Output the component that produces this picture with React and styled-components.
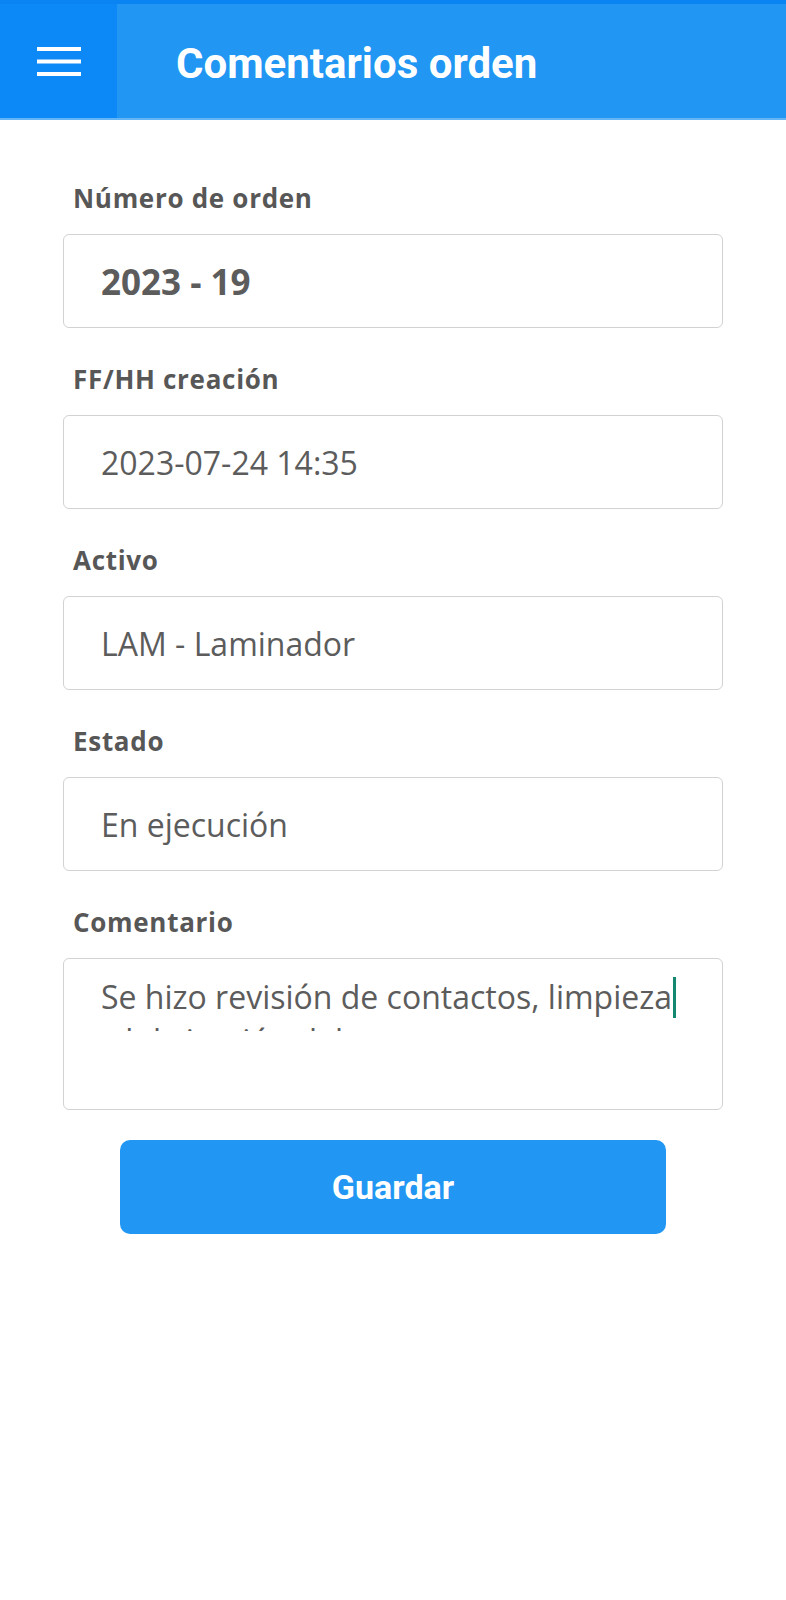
import styled, { createGlobalStyle } from "styled-components";

const GlobalStyle = createGlobalStyle`
  html, body {
    margin: 0;
    padding: 0;
    background: #ffffff;
  }
  body {
    font-family: "Open Sans", "Noto Sans", sans-serif;
  }
  * {
    box-sizing: border-box;
  }
`;

const Screen = styled.div`
  width: 786px;
  min-height: 1600px;
  background: #fff;
`;

const Header = styled.header`
  display: flex;
  height: 118px;
  background: #2196f3;
  border-top: 4px solid #0a84f2;
  box-shadow: 0 2px 0 #64b5f6;
`;

const MenuButton = styled.div`
  width: 117px;
  display: flex;
  align-items: center;
  justify-content: center;
  background: #0c89f6;
`;

const Title = styled.h1`
  margin: 0;
  padding: 6px 0 0 59px;
  align-self: center;
  font-family: Roboto, "Liberation Sans", sans-serif;
  font-weight: 700;
  font-size: 42px;
  line-height: 1;
  color: #fff;
`;

const Form = styled.main`
  display: flex;
  flex-direction: column;
  gap: 33px;
  padding: 62px 63px 0;
`;

const Group = styled.div`
  display: flex;
  flex-direction: column;
`;

const Label = styled.label`
  display: block;
  margin-bottom: 18px;
  padding-left: 10px;
  font-size: 26px;
  font-weight: 700;
  letter-spacing: 0.7px;
  line-height: 36px;
  color: #575757;
`;

const Field = styled.div`
  display: flex;
  align-items: center;
  height: 94px;
  padding: 0 30px 0 37px;
  border: 1px solid #d2d2d2;
  border-radius: 6px;
  font-size: ${(p) => (p.$strong ? "35px" : "32px")};
  font-weight: ${(p) => (p.$strong ? 700 : 400)};
  color: #5c5c5c;
`;

const TextArea = styled.div`
  height: 152px;
  padding: 16px 20px 0 37px;
  border: 1px solid #d2d2d2;
  border-radius: 6px;
`;

const TextClip = styled.div`
  height: 56px;
  overflow: hidden;
  font-size: 32px;
  line-height: 44px;
  color: #5c5c5c;
  white-space: nowrap;
`;

const Caret = styled.span`
  display: inline-block;
  width: 3px;
  height: 41px;
  margin-left: 1px;
  vertical-align: -9px;
  background: #13876f;
`;

const Actions = styled.div`
  display: flex;
  justify-content: center;
  margin-top: -3px;
`;

const SaveButton = styled.button`
  width: 546px;
  height: 94px;
  border: none;
  border-radius: 10px;
  background: #2196f3;
  color: #fff;
  font-family: Roboto, "Liberation Sans", sans-serif;
  font-weight: 700;
  font-size: 34px;
  cursor: pointer;
`;

const MenuIcon = () => (
  <svg width="44" height="29" viewBox="0 0 44 29" fill="#fff">
    <rect x="0" y="0" width="44" height="4" />
    <rect x="0" y="12.5" width="44" height="4" />
    <rect x="0" y="25" width="44" height="4" />
  </svg>
);

const fields = [
  { label: "Número de orden", value: "2023 - 19", strong: true },
  { label: "FF/HH creación", value: "2023-07-24 14:35" },
  { label: "Activo", value: "LAM - Laminador" },
  { label: "Estado", value: "En ejecución" },
];

export default function App() {
  return (
    <>
      <GlobalStyle />
      <Screen>
        <Header>
          <MenuButton>
            <MenuIcon />
          </MenuButton>
          <Title>Comentarios orden</Title>
        </Header>
        <Form>
          {fields.map((f) => (
            <Group key={f.label}>
              <Label>{f.label}</Label>
              <Field $strong={f.strong}>{f.value}</Field>
            </Group>
          ))}
          <Group>
            <Label>Comentario</Label>
            <TextArea>
              <TextClip>
                Se hizo revisión de contactos, limpieza
                <Caret />
                <br />
                y lubricación del motor.
              </TextClip>
            </TextArea>
          </Group>
          <Actions>
            <SaveButton>Guardar</SaveButton>
          </Actions>
        </Form>
      </Screen>
    </>
  );
}
